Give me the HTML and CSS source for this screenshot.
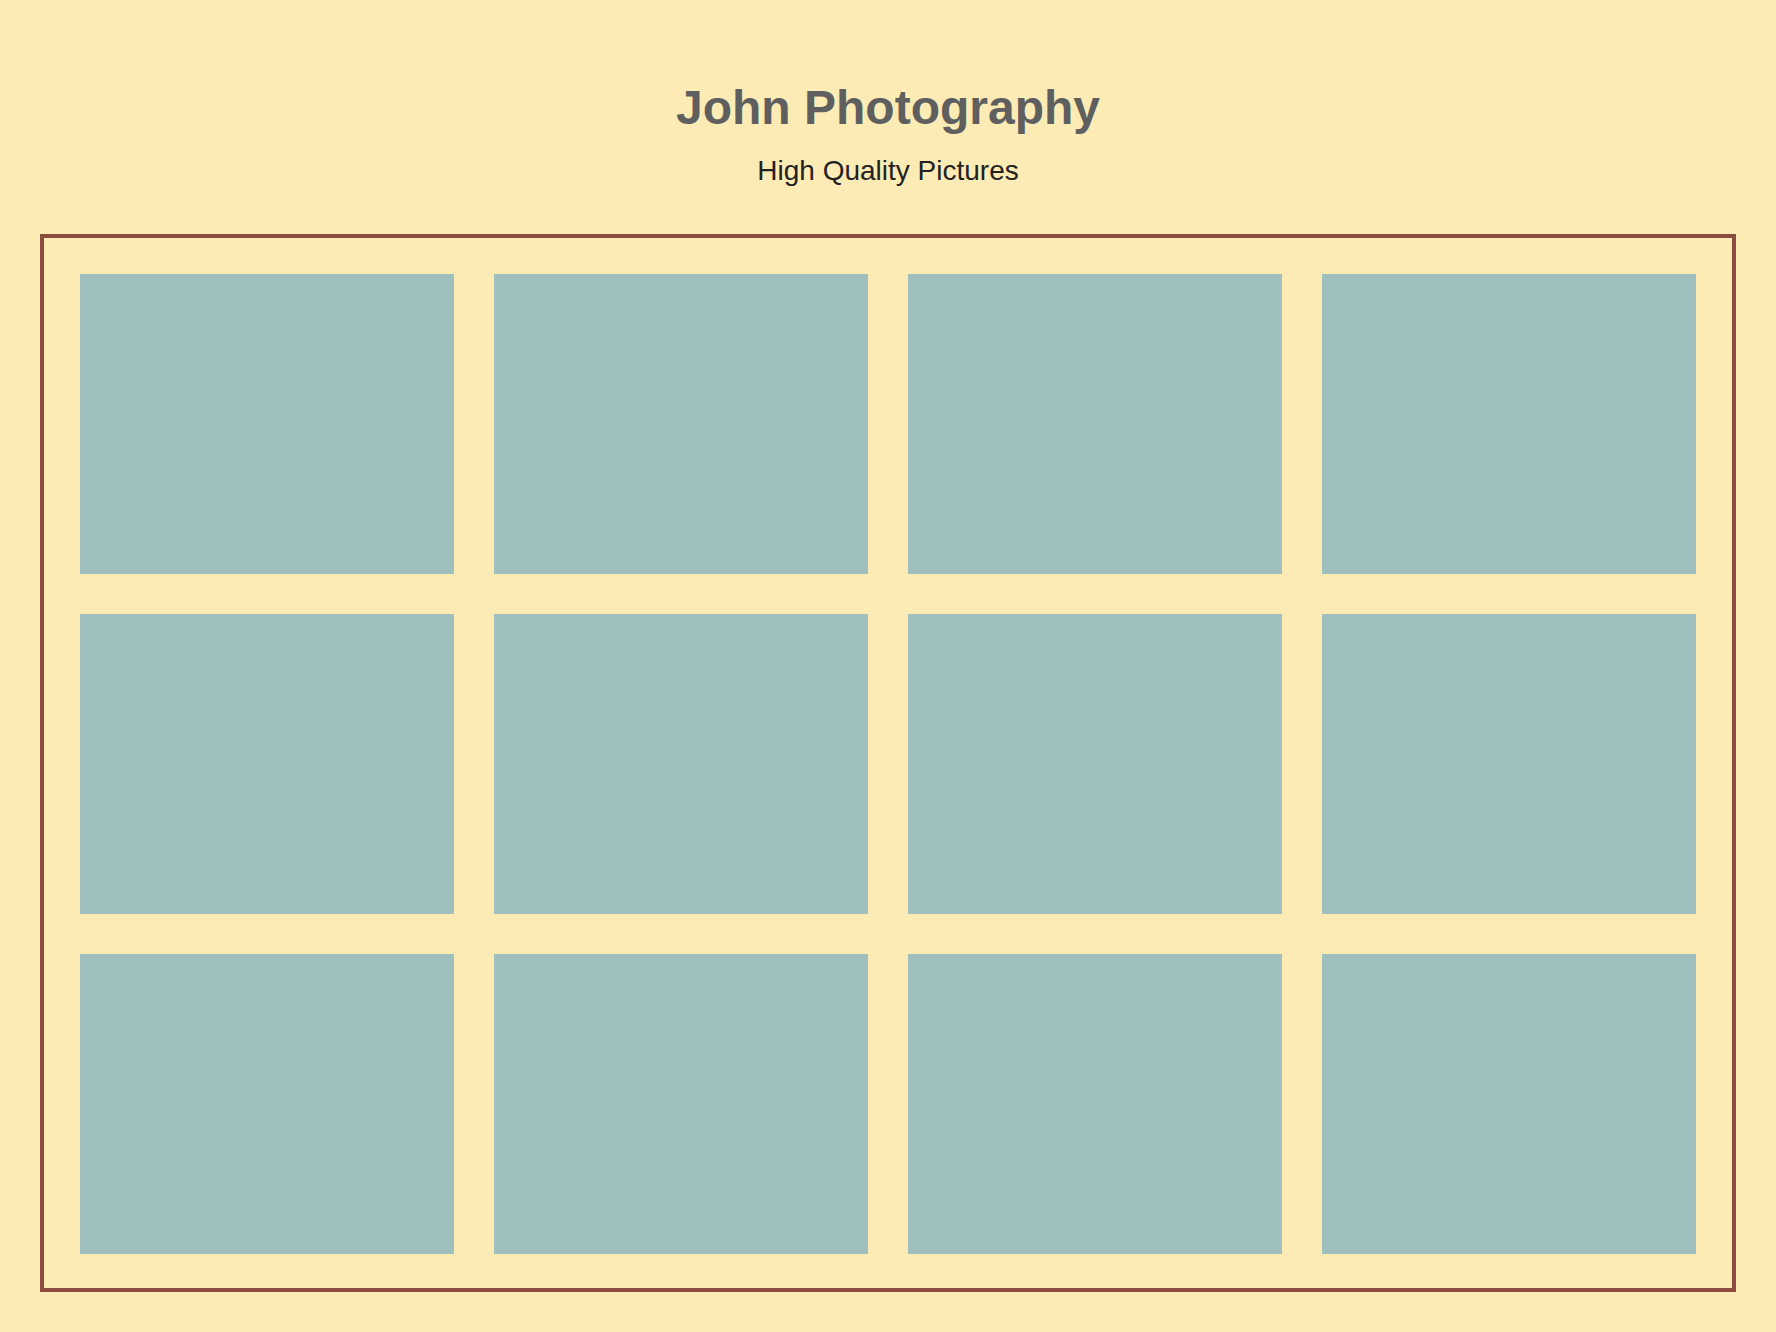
FILE: index.html
```html
<!DOCTYPE html>
<html lang="en">
<head>
<meta charset="utf-8">
<title>John Photography</title>
<link rel="stylesheet" href="styles.css">
</head>
<body>
<header class="site-header">
  <h1 class="site-title">John Photography</h1>
  <p class="site-tagline">High Quality Pictures</p>
</header>
<main class="gallery">
  <div class="photo"></div>
  <div class="photo"></div>
  <div class="photo"></div>
  <div class="photo"></div>
  <div class="photo"></div>
  <div class="photo"></div>
  <div class="photo"></div>
  <div class="photo"></div>
  <div class="photo"></div>
  <div class="photo"></div>
  <div class="photo"></div>
  <div class="photo"></div>
</main>
</body>
</html>
```

FILE: styles.css
```css
html, body {
  margin: 0;
  padding: 0;
  background: #fcebb4;
}

body {
  font-family: "Liberation Sans", Arial, sans-serif;
  padding-bottom: 40px;
}

.site-header {
  padding-top: 80px;
  text-align: center;
}

.site-title {
  margin: 0;
  font-size: 48px;
  line-height: 56px;
  font-weight: 700;
  color: #5f5f5f;
}

.site-tagline {
  margin: 19px 0 0;
  font-size: 28px;
  line-height: 32px;
  color: #222222;
}

.gallery {
  margin: 47px 40px 0;
  border: 4px solid #8c4c3f;
  padding: 36px 36px 34px;
  display: grid;
  grid-template-columns: repeat(4, 1fr);
  grid-auto-rows: 300px;
  gap: 40px;
}

.photo {
  background: #9fc0bf;
}
```
